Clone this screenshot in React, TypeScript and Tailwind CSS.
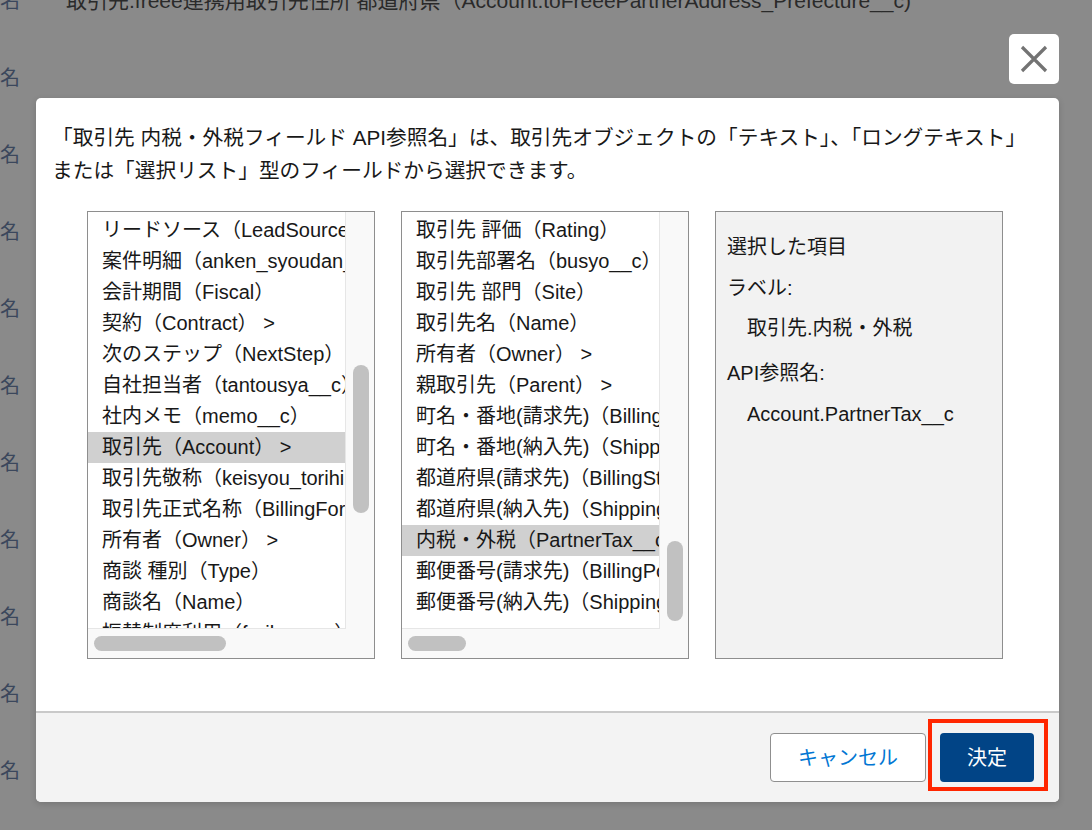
import React from 'react';

const leftItems = [
   'リードソース（LeadSource）',
   '案件明細（anken_syoudan__c）',
   '会計期間（Fiscal）',
   '契約（Contract） >',
   '次のステップ（NextStep）',
   '自社担当者（tantousya__c）',
   '社内メモ（memo__c）',
   '取引先（Account） >',
   '取引先敬称（keisyou_torihikisaki__c）',
   '取引先正式名称（BillingFormalName__c）',
   '所有者（Owner） >',
   '商談 種別（Type）',
   '商談名（Name）',
   '振替制度利用（furikae__c）',
];

const middleItems = [
   '取引先 評価（Rating）',
   '取引先部署名（busyo__c）',
   '取引先 部門（Site）',
   '取引先名（Name）',
   '所有者（Owner） >',
   '親取引先（Parent） >',
   '町名・番地(請求先)（BillingStreet）',
   '町名・番地(納入先)（ShippingStreet）',
   '都道府県(請求先)（BillingState）',
   '都道府県(納入先)（ShippingState）',
   '内税・外税（PartnerTax__c）',
   '郵便番号(請求先)（BillingPostalCode）',
   '郵便番号(納入先)（ShippingPostalCode）',
];

type ListProps = {
   items: string[];
   selected: number;
   vThumbTop: string;
   vThumbHeight: string;
   hThumbWidth: string;
};

// fake scrollable list box, scrollbars drawn as divs
const FieldList: React.FC<ListProps> = ({ items, selected, vThumbTop, vThumbHeight, hThumbWidth }) => {
   return (
      <div className="w-[288px] h-[448px] border border-[#8e8e8e] bg-[#f9f9f9] flex flex-col">
         <div className="flex flex-1 min-h-0">
            <div className="flex-1 min-w-0 bg-white overflow-hidden pt-[3px] border-r border-b border-[#e6e6e6]">
               {items.map((item, i) => (
                  <div
                     key={item}
                     className={
                        i === selected
                           ? 'h-[31px] leading-[31px] pl-[14px] whitespace-nowrap bg-[#d0d0d0]'
                           : 'h-[31px] leading-[31px] pl-[14px] whitespace-nowrap'
                     }
                  >
                     {item}
                  </div>
               ))}
            </div>
            <div className="w-[28px] shrink-0 flex flex-col">
               <div className={`${vThumbTop} ${vThumbHeight} ml-[7px] w-[16px] rounded-full bg-[#c1c1c1]`} />
            </div>
         </div>
         <div className="h-[29px] shrink-0 pt-[7px] pl-[6px]">
            <div className={`${hThumbWidth} h-[15px] rounded-full bg-[#c1c1c1]`} />
         </div>
      </div>
   );
};

const App: React.FC = () => {
   const rows = Array.from({ length: 11 }, (_, i) => i);
   return (
      <div className="relative w-[1092px] h-[830px] overflow-hidden bg-[#8a8a8a] text-[#181818] font-['Liberation_Sans','Noto_Sans_CJK_JP',sans-serif]">
         {/* page behind the dialog */}
         <div className="flex flex-col -mt-[38px]">
            {rows.map((i) => (
               <div key={i} className="h-[77px] flex items-center text-[20px]">
                  <span className="w-[66px] text-[#3b475c]">名</span>
                  {i === 0 && (
                     <span className="text-[#2a2a2a] whitespace-nowrap text-[21px]">
                        取引先.freee連携用取引先住所 都道府県（Account.toFreeePartnerAddress_Prefecture__c)
                     </span>
                  )}
               </div>
            ))}
         </div>

         {/* dialog */}
         <div className="absolute inset-0 flex flex-col pt-[34px] pl-[36px] pr-[33px]">
            <button className="self-end w-[50px] h-[50px] rounded-[5px] bg-white flex items-center justify-center">
               <svg width="28" height="28" viewBox="0 0 28 28" fill="none">
                  <path d="M2 2 L26 26 M26 2 L2 26" stroke="#737373" strokeWidth="3.2" />
               </svg>
            </button>
            <div className="mt-[14px] w-[1023px] h-[704px] bg-white rounded-[5px] flex flex-col overflow-hidden shadow-[0_2px_6px_rgba(0,0,0,0.15)]">
               <div className="pt-[23px] px-[16px]">
                  <p className="text-[20.7px] leading-[33px] whitespace-nowrap">
                     「取引先 内税・外税フィールド API参照名」は、取引先オブジェクトの「テキスト」、「ロングテキスト」
                     <br />
                     または「選択リスト」型のフィールドから選択できます。
                  </p>
               </div>
               <div className="mt-[24px] pl-[51px] flex gap-[26px] text-[20px]">
                  <FieldList
                     items={leftItems}
                     selected={7}
                     vThumbTop="mt-[153px]"
                     vThumbHeight="h-[148px]"
                     hThumbWidth="w-[132px]"
                  />
                  <FieldList
                     items={middleItems}
                     selected={10}
                     vThumbTop="mt-[329px]"
                     vThumbHeight="h-[80px]"
                     hThumbWidth="w-[58px]"
                  />
                  <div className="w-[288px] h-[448px] border border-[#8e8e8e] bg-[#f2f2f2] pt-[21px] pl-[11px] flex flex-col">
                     <div className="leading-[28px]">選択した項目</div>
                     <div className="leading-[28px] mt-[13px]">ラベル:</div>
                     <div className="leading-[28px] mt-[12px] pl-[20px]">取引先.内税・外税</div>
                     <div className="leading-[28px] mt-[17px]">API参照名:</div>
                     <div className="leading-[28px] mt-[13px] pl-[20px]">Account.PartnerTax__c</div>
                  </div>
               </div>
               <div className="mt-auto h-[91px] shrink-0 border-t-2 border-[#c9c9c9] bg-[#f3f3f3] flex items-center justify-end gap-[14px] pr-[25px] text-[20px]">
                  <button className="w-[156px] h-[49px] rounded-[4px] border border-[#8f8f8f] bg-white text-[#0176d3]">
                     キャンセル
                  </button>
                  <div className="relative">
                     <button className="w-[94px] h-[49px] rounded-[4px] bg-[#014486] text-white">決定</button>
                     <div className="absolute -left-[12px] -right-[14px] -top-[14px] -bottom-[9px] border-4 border-[#ff2600]" />
                  </div>
               </div>
            </div>
         </div>
      </div>
   );
};

export default App;
